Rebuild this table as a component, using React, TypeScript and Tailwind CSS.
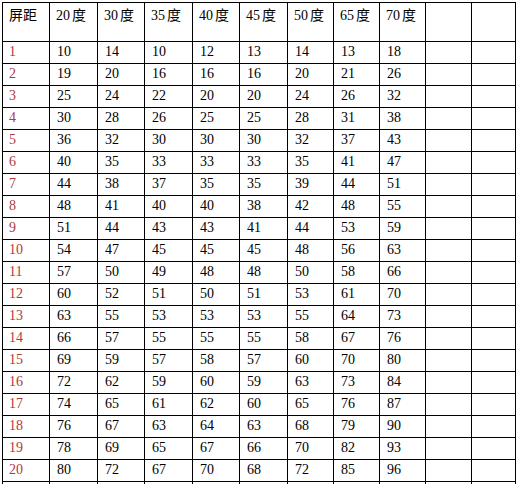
const headers = ["屏距", "20度", "30度", "35度", "40度", "45度", "50度", "65度", "70度", "", ""]

const widths = [47, 48, 47, 48, 47, 48, 46, 46, 46, 46, 44]

const rows = [
    [10, 14, 10, 12, 13, 14, 13, 18],
    [19, 20, 16, 16, 16, 20, 21, 26],
    [25, 24, 22, 20, 20, 24, 26, 32],
    [30, 28, 26, 25, 25, 28, 31, 38],
    [36, 32, 30, 30, 30, 32, 37, 43],
    [40, 35, 33, 33, 33, 35, 41, 47],
    [44, 38, 37, 35, 35, 39, 44, 51],
    [48, 41, 40, 40, 38, 42, 48, 55],
    [51, 44, 43, 43, 41, 44, 53, 59],
    [54, 47, 45, 45, 45, 48, 56, 63],
    [57, 50, 49, 48, 48, 50, 58, 66],
    [60, 52, 51, 50, 51, 53, 61, 70],
    [63, 55, 53, 53, 53, 55, 64, 73],
    [66, 57, 55, 55, 55, 58, 67, 76],
    [69, 59, 57, 58, 57, 60, 70, 80],
    [72, 62, 59, 60, 59, 63, 73, 84],
    [74, 65, 61, 62, 60, 65, 76, 87],
    [76, 67, 63, 64, 63, 68, 79, 90],
    [78, 69, 65, 67, 66, 70, 82, 93],
    [80, 72, 67, 70, 68, 72, 85, 96],
]

export default function App() {
    return (
        <div className="w-[519px] h-[484px] overflow-hidden bg-white pt-[2px] pl-[2px]">
            <table
                className="table-fixed border-collapse text-[14px] text-black"
                style={{ fontFamily: '"Liberation Serif", "Noto Sans CJK SC", serif' }}
            >
                <colgroup>
                    {widths.map((w, i) => (
                        <col key={i} style={{ width: w }} />
                    ))}
                </colgroup>
                <thead>
                    <tr className="h-[39px]">
                        {headers.map((h, i) => (
                            <th key={i} className="border border-black align-top text-left font-normal pl-[6px] pt-[3px] leading-[20px]">
                                {h.endsWith("度") ? (
                                    <>
                                        {h.slice(0, -1)}
                                        <span className="ml-[2px]">度</span>
                                    </>
                                ) : (
                                    h
                                )}
                            </th>
                        ))}
                    </tr>
                </thead>
                <tbody>
                    {rows.map((row, r) => (
                        <tr key={r} className="h-[22px]">
                            <td className="border border-black pl-[6px] leading-[20px] pb-[1px] text-[#b03a3a]">{r + 1}</td>
                            {row.map((v, c) => (
                                <td key={c} className="border border-black pl-[7px] leading-[20px] pb-[1px]">
                                    {v}
                                </td>
                            ))}
                            <td className="border border-black"></td>
                            <td className="border border-black"></td>
                        </tr>
                    ))}
                    <tr className="h-[22px]">
                        {widths.map((_, i) => (
                            <td key={i} className="border border-black"></td>
                        ))}
                    </tr>
                </tbody>
            </table>
        </div>
    )
}
